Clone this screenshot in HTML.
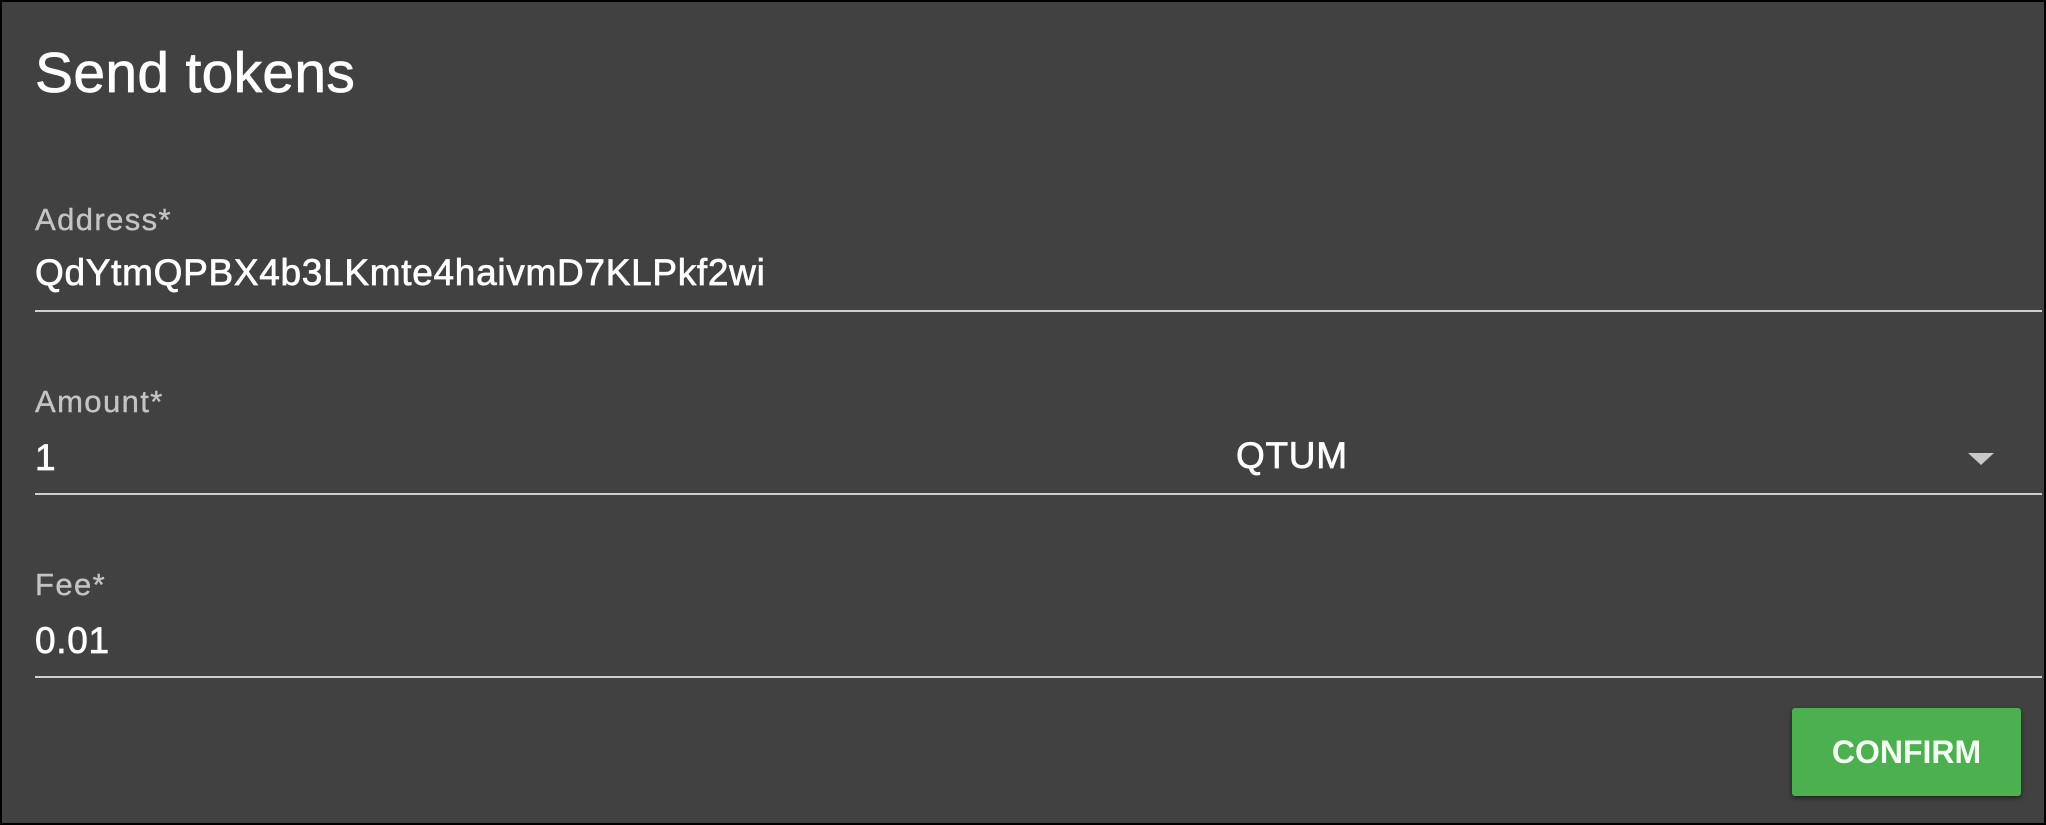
<!DOCTYPE html>
<html><head><meta charset="utf-8"><style>
html,body{margin:0;padding:0}
body{width:2046px;height:825px;overflow:hidden;background:#000;font-family:"Liberation Sans",sans-serif;position:relative}
.card{position:absolute;left:2px;top:2px;width:2042px;height:821px;background:#414141}
.t{position:absolute;color:#fff;white-space:nowrap;line-height:1;-webkit-text-stroke:0.7px currentColor}
.lbl{color:#c4c4c4;font-size:31px;letter-spacing:1.4px;-webkit-text-stroke:0.4px currentColor}
.val{font-size:37px;letter-spacing:0.7px}
.line{position:absolute;left:33px;right:2px;height:2px;background:#cfcfcf}
.btn{position:absolute;left:1790px;top:706px;width:229px;height:88px;background:#4caf50;border-radius:3px;box-shadow:0 2px 4px rgba(0,0,0,.5);color:#f3fff1;font-weight:bold;font-size:32px;display:flex;align-items:center;justify-content:center}
</style></head><body>
<div class="card">
<div class="t" style="left:33px;top:43px;font-size:57px;letter-spacing:0.3px">Send tokens</div>
<div class="t lbl" style="left:33px;top:202px">Address*</div>
<div class="t val" style="left:33px;top:252px">QdYtmQPBX4b3LKmte4haivmD7KLPkf2wi</div>
<div class="line" style="top:308px"></div>
<div class="t lbl" style="left:33px;top:384px">Amount*</div>
<div class="t val" style="left:33px;top:437px">1</div>
<div class="t val" style="left:1234px;top:435px">QTUM</div>
<svg style="position:absolute;left:1966px;top:451px" width="26" height="12"><polygon points="0,0 26,0 13,12" fill="#c8c8c8"/></svg>
<div class="line" style="top:491px"></div>
<div class="t lbl" style="left:33px;top:567px">Fee*</div>
<div class="t val" style="left:33px;top:620px">0.01</div>
<div class="line" style="top:674px"></div>
<div class="btn">CONFIRM</div>
</div>
</body></html>
